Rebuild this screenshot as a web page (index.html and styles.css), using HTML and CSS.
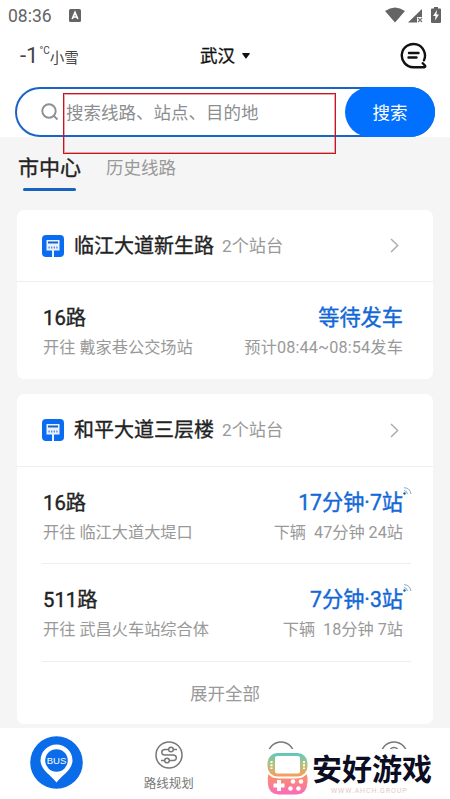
FILE: index.html
```html
<!DOCTYPE html>
<html lang="zh-CN">
<head>
<meta charset="utf-8">
<title>公交查询</title>
<link rel="stylesheet" href="styles.css">
</head>
<body>
<div class="top">
  <div class="status">
    <span class="time">08:36</span>
    <svg class="app-badge" width="12" height="13" viewBox="0 0 12 13"><rect width="12" height="13" rx="1.5" fill="#646464"/><path d="M3.2 10 6 3.5 8.8 10M4.2 8h3.6" fill="none" stroke="#fff" stroke-width="1.7"/></svg>
    <svg class="signals" width="57" height="18" viewBox="0 0 57 18">
      <path d="M0 5Q10-2 20 5L10 16.500Z" fill="#646464"/>
      <path d="M23 16.500 37 3v8h-5v5.500Z" fill="#646464"/><path d="m33 12 4 4m0-4-4 4" stroke="#777" stroke-width="1.200"/>
      <path d="M47 2.500h2V1h4v1.500h2q1 0 1 1V16q0 1-1 1h-8q-1 0-1-1V3.500q0-1 1-1Z" fill="#646464"/><path d="m52 4-4 6h2.500L50 14.500l4-6h-2.500Z" fill="#fff"/>
    </svg>
  </div>
  <header class="header">
    <div class="weather"><span class="temp">-1</span><span class="unit">°C</span><span class="cond">小雪</span></div>
    <div class="city">武汉<svg width="8" height="6" viewBox="0 0 8 6"><path d="M.8 0h6.400q1 0 .4.900L4.500 5.200q-.5.600-1 0L.4.900Q-.2 0 .8 0Z" fill="#111"/></svg></div>
    <svg class="chat" width="27" height="27" viewBox="0 0 27 27" fill="none" stroke="#111" stroke-width="2.400" stroke-linecap="round" stroke-linejoin="round"><path d="M24 18.300A11.600 11.600 0 1 0 13.300 25.200H24.500Q26 24.500 24.600 23.200L22.800 21.200M9 11h9.500M8.500 15.500H16.500"/></svg>
  </header>
  <div class="search">
    <svg class="mag" width="18" height="18" viewBox="0 0 18 18" fill="none" stroke="#8b9196" stroke-width="1.900"><circle cx="8" cy="8" r="6.700"/><path d="m12.800 12.800 3.700 3.700"/></svg>
    <span class="placeholder">搜索线路、站点、目的地</span>
    <button class="go">搜索</button>
    <div class="highlight"></div>
  </div>
</div>
<nav class="tabs"><span class="tab active">市中心</span><span class="tab">历史线路</span></nav>
<main class="list">
  <section class="card">
    <div class="stop">
      <svg class="sign" width="22" height="22" viewBox="0 0 22 22"><rect width="22" height="22" rx="4" fill="#0a6cf0"/><path d="M4.500 5h13v10.500h-5.500V22h-2v-6.500H4.500Z" fill="#e8f3ff"/><path d="M6 7.500h10" stroke="#1b62c4" stroke-width="2"/><path d="M6.500 12.500h9.500" stroke="#4a82cc" stroke-width="2" stroke-dasharray="1.200 1.400"/></svg>
      <h2>临江大道新生路</h2><span class="count">2个站台</span>
      <svg class="chev" width="9" height="15" viewBox="0 0 9 15"><path d="m1 1 6.700 6.500L1 14" fill="none" stroke="#aaa" stroke-width="1.400"/></svg>
    </div>
    <div class="line">
      <div class="row"><b>16路</b><strong>等待发车</strong></div>
      <div class="row sub"><span>开往 戴家巷公交场站</span><span class="eta">预计08:44~08:54发车</span></div>
    </div>
  </section>
  <section class="card tall">
    <div class="stop">
      <svg class="sign" width="22" height="22" viewBox="0 0 22 22"><rect width="22" height="22" rx="4" fill="#0a6cf0"/><path d="M4.500 5h13v10.500h-5.500V22h-2v-6.500H4.500Z" fill="#e8f3ff"/><path d="M6 7.500h10" stroke="#1b62c4" stroke-width="2"/><path d="M6.500 12.500h9.500" stroke="#4a82cc" stroke-width="2" stroke-dasharray="1.200 1.400"/></svg>
      <h2>和平大道三层楼</h2><span class="count">2个站台</span>
      <svg class="chev" width="9" height="15" viewBox="0 0 9 15"><path d="m1 1 6.700 6.500L1 14" fill="none" stroke="#aaa" stroke-width="1.400"/></svg>
    </div>
    <div class="line">
      <div class="row"><b>16路</b><strong>17分钟·7站<svg class="live" width="9" height="8" viewBox="0 0 9 8" fill="none" stroke="#7fabc9"><circle cx="1.500" cy="6.500" r="1.200" fill="#17609c" stroke="none"/><path d="M1 3.500Q4 3.800 4.500 7M1 .7Q7 1 8 7"/></svg></strong></div>
      <div class="row sub"><span>开往 临江大道大堤口</span><span>下辆&nbsp; 47分钟 24站</span></div>
    </div>
    <div class="line">
      <div class="row"><b>511路</b><strong>7分钟·3站<svg class="live" width="9" height="8" viewBox="0 0 9 8" fill="none" stroke="#7fabc9"><circle cx="1.500" cy="6.500" r="1.200" fill="#17609c" stroke="none"/><path d="M1 3.500Q4 3.800 4.500 7M1 .7Q7 1 8 7"/></svg></strong></div>
      <div class="row sub"><span>开往 武昌火车站综合体</span><span>下辆&nbsp; 18分钟 7站</span></div>
    </div>
    <div class="more">展开全部</div>
  </section>
</main>
<footer class="nav">
  <div class="item"><svg width="53" height="53" viewBox="0 0 53 53"><circle cx="26.500" cy="26.500" r="26.300" fill="#0a6ce8"/><path d="M26.500 46.500C22 40 10.500 34 10.500 24.500a16 16 0 0 1 32 0C42.500 34 31 40 26.500 46.500Z" fill="#fff"/><circle cx="26.500" cy="24.500" r="11.300" fill="#0a6ce8"/><text x="26.500" y="28" class="bus">BUS</text></svg></div>
  <div class="item"><svg width="28" height="28" viewBox="0 0 28 28" fill="none" stroke="#777" stroke-width="1.500"><circle cx="14" cy="14" r="13"/><path d="M13.500 8.500H10q-3.200 0-3.200 2.800T10 14h8q3.300 0 3.300 2.800T18 19.500h-4M18.500 8.500H22M6 19.500h4"/><circle cx="16" cy="8.500" r="2.300"/><circle cx="12" cy="19.500" r="2.300"/></svg><span>路线规划</span></div>
  <div class="item"><svg width="28" height="28" viewBox="0 0 28 28" fill="none" stroke="#777" stroke-width="1.500"><circle cx="14" cy="14" r="13"/></svg></div>
  <div class="item"><svg width="28" height="28" viewBox="0 0 28 28" fill="none" stroke="#777" stroke-width="1.500"><circle cx="14" cy="14" r="13"/><circle cx="14" cy="11" r="4.500"/></svg></div>
</footer>
<div class="brand">
  <svg width="41" height="42" viewBox="0 0 41 42">
    <defs><linearGradient id="g1" x2="0" y2="1"><stop stop-color="#5cc8bd"/><stop offset=".5" stop-color="#b5c17d"/><stop offset="1" stop-color="#fb9b59"/></linearGradient><linearGradient id="g2" x2="0" y2="1"><stop stop-color="#fb965e"/><stop offset="1" stop-color="#f969bd"/></linearGradient></defs>
    <rect x=".5" width="40" height="23.500" rx="10" fill="url(#g1)"/><rect x="8" y="3" width="25" height="17.500" rx="2" fill="#fff"/>
    <path d="M4.500 8v8M37 8v8" stroke="#fff" stroke-width="2" stroke-dasharray="2 1.300"/>
    <path d="M1 20.500q4 4.500 10 4.500h19q6 0 10-4.500 1.500 4 1 9-1 12-11 12.500H11Q1 41 .3 30 0 24 1 20.500Z" fill="url(#g2)" stroke="#fff"/>
    <path d="M12 27v11M6.500 32.500h11" stroke="#fff" stroke-width="4"/><g fill="#fff"><circle cx="26" cy="28.500" r="2.300"/><circle cx="34" cy="28.500" r="2.300"/><circle cx="23.500" cy="35.500" r="2.300"/><circle cx="31.500" cy="35.500" r="2.300"/></g>
  </svg>
  <div class="words"><div class="name">安好游戏</div><div class="url">WWW.AHCH.GROUP</div></div>
</div>
</body>
</html>
```
FILE: styles.css
```css
* { box-sizing: border-box; }
body {
  margin: 0; width: 450px; height: 799px; overflow: hidden; position: relative;
  display: flex; flex-direction: column; background: #f5f5f5; color: #222;
  font-family: Roboto, "Noto Sans CJK SC", sans-serif; white-space: nowrap;
}
svg { display: block; flex: none; }
.top { height: 137px; background: #fff; flex: none; }
.status { height: 31px; display: flex; align-items: center; padding: 0 8px; }
.time { font-size: 17.5px; color: #646464; line-height: 32px; padding-top: 1px; }
.app-badge { margin-left: 17px; }
.signals { margin-left: auto; margin-top: -2px; }
.header { height: 48px; margin-bottom: 8px; padding: 0 23px 0 20px; display: grid; grid-template-columns: 1fr auto 1fr; align-items: center; }
.weather { display: flex; align-items: center; color: #444; }
.temp { font-size: 22px; padding-top: 1px; }
.unit { font-size: 10px; margin: -10px 0 0 1px; }
.cond { font-size: 14.5px; line-height: 20px; margin-top: 7px; }
.city { display: flex; align-items: center; gap: 7px; font-size: 17.5px; line-height: 26px; color: #111; -webkit-text-stroke: .3px #111; padding-left: 3px; margin-top: 1px; }
.chat { justify-self: end; }
.search { position: relative; height: 50px; margin: 0 15px; border: 2px solid #1964c5; border-radius: 25px; display: flex; align-items: center; padding-left: 24px; }
.placeholder { font-size: 17.5px; color: #8b8e91; margin-left: 7px; line-height: 26px; padding-top: 2px; }
.go { font-family: inherit; width: 90px; height: 50px; margin: -2px -2px -2px auto; padding: 0 0 2px; border: 0; border-radius: 25px; background: #0270ff; color: #fff; font-size: 17.5px; }
.highlight { position: absolute; left: 46px; top: 4px; width: 273px; height: 61px; border: 1px solid #c4161f; box-shadow: inset 0 0 0 1px rgba(205, 30, 45, .4); }
.tabs { height: 73px; flex: none; display: flex; align-items: flex-start; padding: 15px 18px 0; gap: 25px; }
.tab { font-size: 17.5px; line-height: 32px; color: #999; }
.tab.active { font-size: 21px; color: #222; -webkit-text-stroke: .35px #222; display: flex; flex-direction: column; align-items: center; }
.tab.active::after { content: ""; width: 53px; height: 3px; margin-top: 4px; margin-right: 1px; border-radius: 2px; background: #1763bd; }
.list { display: flex; flex-direction: column; gap: 15px; padding: 0 17px; height: 518px; }
.card { background: #fff; border-radius: 7px; height: 169px; flex: none; }
.card.tall { height: 330px; }
.stop { height: 72px; border-bottom: 1px solid #eee; display: flex; align-items: center; padding: 0 34px 0 25px; }
.tall .stop { height: 73px; }
.stop h2 { margin: 0 8px 0 10px; font-size: 20px; font-weight: 400; line-height: 30px; -webkit-text-stroke: .35px #222; }
.count { font-size: 17.2px; color: #999; line-height: 28px; }
.chev { margin-left: auto; }
.line { height: 97px; margin: 0 22px 0 25px; padding: 21px 0 0; }
.tall .line { border-bottom: 1px solid #eee; }
.line + .line { height: 98px; }
.row { display: flex; justify-content: space-between; line-height: 30px; padding: 0 8px 0 1px; }
.row b { font-size: 20.3px; font-weight: 400; -webkit-text-stroke: .4px #222; }
.row strong { position: relative; font-size: 21.2px; font-weight: 400; color: #1268d6; -webkit-text-stroke: .4px #1268d6; }
.live { position: absolute; right: -9px; top: -1px; }
.row.sub { font-size: 16.2px; color: #999; line-height: 29px; }
.eta { letter-spacing: .15px; }
.more { text-align: center; font-size: 17.5px; color: #999; line-height: 64px; }
.nav { height: 71px; flex: none; background: #fff; display: grid; grid-template-columns: repeat(4, 112.5px); }
.item { display: flex; flex-direction: column; align-items: center; padding-top: 13px; font-size: 12.5px; color: #777; line-height: 24px; }
.item:first-child { padding-top: 8px; }
.item span { margin-top: 3px; }
.bus { font: 9.5px "Liberation Sans", sans-serif; fill: #fff; text-anchor: middle; }
.brand { position: absolute; left: 262px; top: 749px; width: 188px; height: 50px; background: #fff; display: flex; padding: 4px 0 0 5px; }
.words { margin-left: 4px; }
.name { font-size: 30px; font-weight: 700; line-height: 34px; color: #0b0d22; }
.url { font-size: 7px; letter-spacing: .9px; line-height: 8px; color: #e4c9c3; padding-left: 19px; }
```
